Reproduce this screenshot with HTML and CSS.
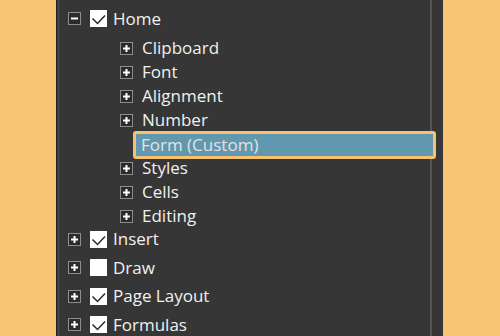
FILE: index.html
```html
<!DOCTYPE html>
<html>
<head>
<meta charset="utf-8">
<link rel="stylesheet" href="styles.css">
</head>
<body>
<div class="panel">
  <div class="list">
    <div class="tree">
      <div class="row top">
        <svg class="exp" viewBox="0 0 13 13"><rect x="0.5" y="0.5" width="12" height="12" fill="#2b2b2b" stroke="#8e8e8e"/><path d="M3 6.5H10M6.5 3V10" stroke="#fff" stroke-width="2"/></svg>
        <span class="cb"><svg viewBox="0 0 17 17"><path d="M2.5 8.5L7.5 13.5L15 5.5" fill="none" stroke="#2a2a2a" stroke-width="1.5"/></svg></span>
        <span class="label">Background Removal</span>
      </div>
      <div class="row top">
        <svg class="exp" viewBox="0 0 13 13"><rect x="0.5" y="0.5" width="12" height="12" fill="#2b2b2b" stroke="#8e8e8e"/><path d="M3 6.5H10" stroke="#fff" stroke-width="2"/></svg>
        <span class="cb"><svg viewBox="0 0 17 17"><path d="M2.5 8.5L7.5 13.5L15 5.5" fill="none" stroke="#2a2a2a" stroke-width="1.5"/></svg></span>
        <span class="label">Home</span>
      </div>
      <div class="group">
        <div class="row sub">
          <svg class="exp" viewBox="0 0 13 13"><rect x="0.5" y="0.5" width="12" height="12" fill="#2b2b2b" stroke="#8e8e8e"/><path d="M3 6.5H10M6.5 3V10" stroke="#fff" stroke-width="2"/></svg>
          <span class="label">Clipboard</span>
        </div>
        <div class="row sub">
          <svg class="exp" viewBox="0 0 13 13"><rect x="0.5" y="0.5" width="12" height="12" fill="#2b2b2b" stroke="#8e8e8e"/><path d="M3 6.5H10M6.5 3V10" stroke="#fff" stroke-width="2"/></svg>
          <span class="label">Font</span>
        </div>
        <div class="row sub">
          <svg class="exp" viewBox="0 0 13 13"><rect x="0.5" y="0.5" width="12" height="12" fill="#2b2b2b" stroke="#8e8e8e"/><path d="M3 6.5H10M6.5 3V10" stroke="#fff" stroke-width="2"/></svg>
          <span class="label">Alignment</span>
        </div>
        <div class="row sub">
          <svg class="exp" viewBox="0 0 13 13"><rect x="0.5" y="0.5" width="12" height="12" fill="#2b2b2b" stroke="#8e8e8e"/><path d="M3 6.5H10M6.5 3V10" stroke="#fff" stroke-width="2"/></svg>
          <span class="label">Number</span>
        </div>
        <div class="row selected">
          <span class="label">Form (Custom)</span>
        </div>
        <div class="row sub">
          <svg class="exp" viewBox="0 0 13 13"><rect x="0.5" y="0.5" width="12" height="12" fill="#2b2b2b" stroke="#8e8e8e"/><path d="M3 6.5H10M6.5 3V10" stroke="#fff" stroke-width="2"/></svg>
          <span class="label">Styles</span>
        </div>
        <div class="row sub">
          <svg class="exp" viewBox="0 0 13 13"><rect x="0.5" y="0.5" width="12" height="12" fill="#2b2b2b" stroke="#8e8e8e"/><path d="M3 6.5H10M6.5 3V10" stroke="#fff" stroke-width="2"/></svg>
          <span class="label">Cells</span>
        </div>
        <div class="row sub">
          <svg class="exp" viewBox="0 0 13 13"><rect x="0.5" y="0.5" width="12" height="12" fill="#2b2b2b" stroke="#8e8e8e"/><path d="M3 6.5H10M6.5 3V10" stroke="#fff" stroke-width="2"/></svg>
          <span class="label">Editing</span>
        </div>
      </div>
      <div class="row top">
        <svg class="exp" viewBox="0 0 13 13"><rect x="0.5" y="0.5" width="12" height="12" fill="#2b2b2b" stroke="#8e8e8e"/><path d="M3 6.5H10M6.5 3V10" stroke="#fff" stroke-width="2"/></svg>
        <span class="cb"><svg viewBox="0 0 17 17"><path d="M2.5 8.5L7.5 13.5L15 5.5" fill="none" stroke="#2a2a2a" stroke-width="1.5"/></svg></span>
        <span class="label">Insert</span>
      </div>
      <div class="row top">
        <svg class="exp" viewBox="0 0 13 13"><rect x="0.5" y="0.5" width="12" height="12" fill="#2b2b2b" stroke="#8e8e8e"/><path d="M3 6.5H10M6.5 3V10" stroke="#fff" stroke-width="2"/></svg>
        <span class="cb"></span>
        <span class="label">Draw</span>
      </div>
      <div class="row top">
        <svg class="exp" viewBox="0 0 13 13"><rect x="0.5" y="0.5" width="12" height="12" fill="#2b2b2b" stroke="#8e8e8e"/><path d="M3 6.5H10M6.5 3V10" stroke="#fff" stroke-width="2"/></svg>
        <span class="cb"><svg viewBox="0 0 17 17"><path d="M2.5 8.5L7.5 13.5L15 5.5" fill="none" stroke="#2a2a2a" stroke-width="1.5"/></svg></span>
        <span class="label">Page Layout</span>
      </div>
      <div class="row top">
        <svg class="exp" viewBox="0 0 13 13"><rect x="0.5" y="0.5" width="12" height="12" fill="#2b2b2b" stroke="#8e8e8e"/><path d="M3 6.5H10M6.5 3V10" stroke="#fff" stroke-width="2"/></svg>
        <span class="cb"><svg viewBox="0 0 17 17"><path d="M2.5 8.5L7.5 13.5L15 5.5" fill="none" stroke="#2a2a2a" stroke-width="1.5"/></svg></span>
        <span class="label">Formulas</span>
      </div>
    </div>
  </div>
</div>
</body>
</html>
```
FILE: styles.css
```css
html, body {
  margin: 0;
  padding: 0;
  width: 500px;
  height: 336px;
  overflow: hidden;
  background: #f7c574;
}

.panel {
  margin-left: 56px;
  width: 386px;
  height: 336px;
  background: #363636;
  border-left: 1px solid #222222;
  display: flex;
  overflow: hidden;
}

.list {
  margin-left: 1px;
  width: 371px;
  height: 336px;
  border-left: 1px solid #4c4c4c;
  border-right: 2px solid #555555;
  background: #363636;
}

.tree {
  margin-top: -24.25px;
  font-family: "Open Sans", "Noto Sans", sans-serif;
  font-size: 17px;
  color: #f0f0f0;
}

.row {
  display: flex;
  align-items: center;
  white-space: nowrap;
}

.row.top {
  height: 28.5px;
  padding-left: 9px;
}

.row.top .exp {
  width: 13px;
  height: 13px;
  flex: none;
}

.cb {
  width: 17px;
  height: 17px;
  margin-left: 9px;
  margin-right: 6px;
  background: #ffffff;
  flex: none;
  display: block;
}

.cb svg {
  display: block;
  width: 17px;
  height: 17px;
}

.group {
  margin-top: 3.25px;
  margin-bottom: -3px;
}

.row.sub {
  height: 24px;
  padding-left: 61px;
}

.row.sub .exp {
  width: 13px;
  height: 13px;
  flex: none;
  margin-right: 9px;
}

.row.selected {
  height: 22px;
  margin: -1px -6px -3px 74px;
  border: 3px solid #f6c272;
  border-radius: 3px;
  background: #6297b0;
  color: #e2e2e2;
  padding-left: 5px;
}

.label {
  line-height: 20px;
}
```
